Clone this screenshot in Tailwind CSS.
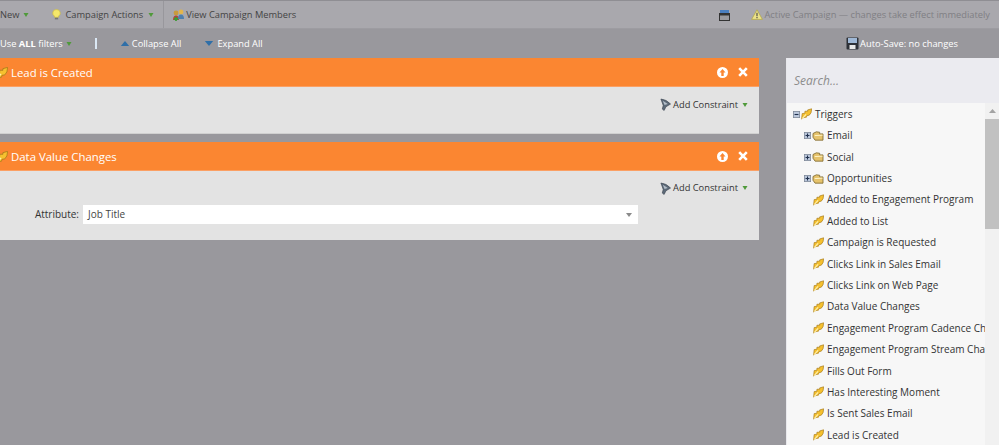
<!DOCTYPE html>
<html lang="en">
<head>
    <meta charset="UTF-8">
    <title>Smart List</title>
    <script src="https://cdn.jsdelivr.net/npm/@tailwindcss/browser@4"></script>
</head>
<body class="w-[999px] h-[445px] overflow-hidden bg-[#99989d] font-['Open_Sans',sans-serif] text-[9.3px] text-[#333]">

    <svg class="hidden">
        <symbol id="quill" viewBox="0 0 14 14">
            <path d="M0.8 13.5 L1.5 6.5 L5 6 L5 3.5 L8.5 3.5 L8.5 1.8 L13.6 0.4 Q13.6 6 10.5 8.5 L7.5 9 L7 11 L3.5 11.5 Z" fill="#f6c12f" stroke="#a97c1c" stroke-width="0.9"/>
            <path d="M1.5 13 L6.5 7.5" stroke="#fff1b0" stroke-width="1.4" fill="none"/>
        </symbol>
        <symbol id="folder" viewBox="0 0 14 12">
            <path d="M1 3 L5 1 L9 1.5 L9 3.5 L13 3.5 L13 11 L3.5 11 L1 7.5 Z" fill="#e6c36c" stroke="#7d672f" stroke-width="1"/>
            <path d="M3 5.5 L12.5 5" stroke="#fff3c4" stroke-width="1.2"/>
        </symbol>
        <symbol id="plus" viewBox="0 0 9 9">
            <rect x="0.5" y="0.5" width="8" height="8" fill="#bcc8dc" stroke="#7d8797"/>
            <path d="M2 4.5 H7 M4.5 2 V7" stroke="#1f2f4c" stroke-width="1.4"/>
        </symbol>
        <symbol id="minus" viewBox="0 0 9 9">
            <rect x="0.5" y="0.5" width="8" height="8" fill="#bcc8dc" stroke="#7d8797"/>
            <path d="M2 4.5 H7" stroke="#1f2f4c" stroke-width="1.4"/>
        </symbol>
        <symbol id="caret" viewBox="0 0 6 6">
            <path d="M0.5 1 H5.5 L3 5 Z" fill="#4f9a3a"/>
        </symbol>
        <symbol id="funnel" viewBox="0 0 12 14">
            <path d="M1 1 Q7 1.5 11.5 6.5 L6.5 9.5 L4.5 13.5 L2.5 12 L3.5 8 Z" fill="#5d6a78" stroke="#3d4753" stroke-width="0.7"/>
            <path d="M3 3 L8.5 6.5 L5 7.5 Z" fill="#b4bec9"/>
        </symbol>
    </svg>

    <!-- toolbar -->
    <div class="h-[29px] flex items-center bg-[#a9a8ad] border-t border-t-[#8f8e93] border-b border-b-[#9d9ca1] text-[#444]">
        <span>New</span>
        <svg class="w-[6px] h-[6px] ml-[4px]"><use href="#caret"/></svg>
        <svg class="w-[9px] h-[13px] ml-[23px]" viewBox="0 0 11 14">
            <path d="M5.5 1 A4.3 4.3 0 0 1 8 9 V10.5 H3 V9 A4.3 4.3 0 0 1 5.5 1 Z" fill="#f4e76b" stroke="#c9b93f" stroke-width="0.8"/>
            <rect x="3.5" y="11" width="4" height="2" fill="#777"/>
        </svg>
        <span class="ml-[4px]">Campaign Actions</span>
        <svg class="w-[6px] h-[6px] ml-[5px]"><use href="#caret"/></svg>
        <div class="w-px h-full bg-[#98979c] ml-[9px]"></div>
        <svg class="w-[13px] h-[14px] ml-[8px]" viewBox="0 0 13 14">
            <circle cx="4" cy="5" r="2.4" fill="#c99a3c"/>
            <circle cx="9" cy="4" r="2.4" fill="#e2b54c"/>
            <path d="M1 12 Q1 7.5 4 7.5 Q7 7.5 7 12 Z" fill="#b0453a"/>
            <path d="M6 11 Q6 6.5 9 6.5 Q12 6.5 12 11 Z" fill="#4e7fae"/>
            <path d="M2 11 H6 M4 9 V13" stroke="#3e9b35" stroke-width="1.8"/>
        </svg>
        <span class="ml-px">View Campaign Members</span>
        <svg class="w-[11px] h-[12px] ml-auto" viewBox="0 0 11 12">
            <rect x="1" y="1" width="9" height="3" fill="#4a7fc0"/>
            <rect x="0.5" y="4.5" width="10" height="7" fill="#9a9a9f" stroke="#333"/>
            <rect x="0.5" y="4.5" width="10" height="2" fill="#333"/>
        </svg>
        <svg class="w-[12px] h-[11px] ml-[21px]" viewBox="0 0 12 11">
            <path d="M6 0.8 L11.4 10.4 H0.6 Z" fill="#ece38a" stroke="#b5a94b" stroke-width="0.8"/>
            <path d="M6 3.8 V7.2 M6 8 V9.3" stroke="#444" stroke-width="1.1"/>
        </svg>
        <span class="ml-px mr-[9px] text-[#807f84]">Active Campaign — changes take effect immediately</span>
    </div>

    <!-- filter bar -->
    <div class="h-[29px] flex items-center text-white">
        <span>Use <b>ALL</b> filters</span>
        <svg class="w-[6px] h-[6px] ml-[3px]"><use href="#caret"/></svg>
        <div class="w-[2px] h-[11px] bg-[#dbe8f5] ml-[23px]"></div>
        <svg class="w-[10px] h-[5px] ml-[23px]" viewBox="0 0 10 6"><path d="M5 0 L10 6 H0 Z" fill="#2f6fa8"/></svg>
        <span class="ml-[2px]">Collapse All</span>
        <svg class="w-[10px] h-[5px] ml-[23px]" viewBox="0 0 10 6"><path d="M0 0 H10 L5 6 Z" fill="#2f6fa8"/></svg>
        <span class="ml-[3px]">Expand All</span>
        <svg class="w-[13px] h-[13px] ml-auto" viewBox="0 0 13 13">
            <rect x="0.5" y="0.5" width="12" height="12" rx="1" fill="#2d3138"/>
            <rect x="2" y="1" width="9" height="5" fill="#9fb8d6"/>
            <rect x="3.5" y="8" width="6" height="4" fill="#e8e8e8"/>
        </svg>
        <span class="ml-px mr-[41px]">Auto-Save: no changes</span>
    </div>

    <div class="flex items-start">
        <!-- filter panels -->
        <div class="w-[759px] flex flex-col gap-[8px]">
            <section class="h-[76px] bg-[#e3e3e3] border-b border-b-[#d0d0d0]">
                <div class="h-[29px] flex items-center pt-[2px] bg-[#fb8631] border-b border-b-[#fba064] text-white text-[11.4px]">
                    <svg class="w-[13px] h-[13px] -ml-[5px] shrink-0"><use href="#quill"/></svg>
                    <span class="ml-[3px]">Lead is Created</span>
                    <svg class="w-[11px] h-[11px] ml-auto -mt-[2px]" viewBox="0 0 11 11"><circle cx="5.5" cy="5.5" r="5.5" fill="#fff"/><path d="M5.5 2 L8.5 5.5 H6.7 V9 H4.3 V5.5 H2.5 Z" fill="#fb8631"/></svg>
                    <svg class="w-[10px] h-[10px] ml-[10px] mr-[11px] -mt-[2px]" viewBox="0 0 10 10"><path d="M1.2 1.2 L8.8 8.8 M8.8 1.2 L1.2 8.8" stroke="#fff" stroke-width="2.6"/></svg>
                </div>
                <div class="h-[34px] flex items-center justify-end pr-[11px] pt-[1px]">
                    <svg class="w-[11px] h-[13px]"><use href="#funnel"/></svg>
                    <span class="ml-[2px]">Add Constraint</span>
                    <svg class="w-[6px] h-[6px] ml-[4px]"><use href="#caret"/></svg>
                </div>
            </section>
            <section class="h-[98px] bg-[#e3e3e3]">
                <div class="h-[29px] flex items-center pt-[2px] bg-[#fb8631] border-b border-b-[#fba064] text-white text-[11.4px]">
                    <svg class="w-[13px] h-[13px] -ml-[5px] shrink-0"><use href="#quill"/></svg>
                    <span class="ml-[3px]">Data Value Changes</span>
                    <svg class="w-[11px] h-[11px] ml-auto -mt-[2px]" viewBox="0 0 11 11"><circle cx="5.5" cy="5.5" r="5.5" fill="#fff"/><path d="M5.5 2 L8.5 5.5 H6.7 V9 H4.3 V5.5 H2.5 Z" fill="#fb8631"/></svg>
                    <svg class="w-[10px] h-[10px] ml-[10px] mr-[11px] -mt-[2px]" viewBox="0 0 10 10"><path d="M1.2 1.2 L8.8 8.8 M8.8 1.2 L1.2 8.8" stroke="#fff" stroke-width="2.6"/></svg>
                </div>
                <div class="h-[34px] flex items-center justify-end pr-[11px]">
                    <svg class="w-[11px] h-[13px]"><use href="#funnel"/></svg>
                    <span class="ml-[2px]">Add Constraint</span>
                    <svg class="w-[6px] h-[6px] ml-[4px]"><use href="#caret"/></svg>
                </div>
                <div class="flex items-center text-[10px]">
                    <span class="w-[79px] text-right">Attribute:</span>
                    <div class="w-[555px] h-[19px] ml-[4px] bg-white flex items-center pl-[5px] pr-[6px] text-[#444]">
                        <span>Job Title</span>
                        <svg class="w-[6px] h-[4px] ml-auto" viewBox="0 0 6 4"><path d="M0 0 H6 L3 4 Z" fill="#8a8a8a"/></svg>
                    </div>
                </div>
            </section>
        </div>

        <!-- trigger palette -->
        <aside class="w-[213px] h-[387px] ml-[27px] flex flex-col bg-[#f7f7f7] border-l border-l-[#e8e8ec] overflow-hidden">
            <div class="h-[45px] shrink-0 bg-[#ebebf0] flex items-center pl-[7px] italic text-[12px] text-[#8d8d8d]">Search...</div>
            <div class="flex flex-1 min-h-0">
                <ul class="flex-1 min-w-0 whitespace-nowrap overflow-hidden pt-[0.7px] text-[10px]">
                    <li class="h-[21.4px] flex items-center pl-[6px]">
                        <svg class="w-[7px] h-[7px] shrink-0"><use href="#minus"/></svg>
                        <svg class="w-[11px] h-[12px] ml-[1px] shrink-0"><use href="#quill"/></svg>
                        <span class="ml-[3px]">Triggers</span>
                    </li>
                    <li class="h-[21.4px] flex items-center pl-[17px]">
                        <svg class="w-[7px] h-[7px] shrink-0"><use href="#plus"/></svg>
                        <svg class="w-[12px] h-[10px] ml-px shrink-0"><use href="#folder"/></svg>
                        <span class="ml-[3px]">Email</span>
                    </li>
                    <li class="h-[21.4px] flex items-center pl-[17px]">
                        <svg class="w-[7px] h-[7px] shrink-0"><use href="#plus"/></svg>
                        <svg class="w-[12px] h-[10px] ml-px shrink-0"><use href="#folder"/></svg>
                        <span class="ml-[3px]">Social</span>
                    </li>
                    <li class="h-[21.4px] flex items-center pl-[17px]">
                        <svg class="w-[7px] h-[7px] shrink-0"><use href="#plus"/></svg>
                        <svg class="w-[12px] h-[10px] ml-px shrink-0"><use href="#folder"/></svg>
                        <span class="ml-[3px]">Opportunities</span>
                    </li>
                    <li class="h-[21.4px] flex items-center pl-[26px]"><svg class="w-[11px] h-[12px] shrink-0"><use href="#quill"/></svg><span class="ml-[3px]">Added to Engagement Program</span></li>
                    <li class="h-[21.4px] flex items-center pl-[26px]"><svg class="w-[11px] h-[12px] shrink-0"><use href="#quill"/></svg><span class="ml-[3px]">Added to List</span></li>
                    <li class="h-[21.4px] flex items-center pl-[26px]"><svg class="w-[11px] h-[12px] shrink-0"><use href="#quill"/></svg><span class="ml-[3px]">Campaign is Requested</span></li>
                    <li class="h-[21.4px] flex items-center pl-[26px]"><svg class="w-[11px] h-[12px] shrink-0"><use href="#quill"/></svg><span class="ml-[3px]">Clicks Link in Sales Email</span></li>
                    <li class="h-[21.4px] flex items-center pl-[26px]"><svg class="w-[11px] h-[12px] shrink-0"><use href="#quill"/></svg><span class="ml-[3px]">Clicks Link on Web Page</span></li>
                    <li class="h-[21.4px] flex items-center pl-[26px]"><svg class="w-[11px] h-[12px] shrink-0"><use href="#quill"/></svg><span class="ml-[3px]">Data Value Changes</span></li>
                    <li class="h-[21.4px] flex items-center pl-[26px]"><svg class="w-[11px] h-[12px] shrink-0"><use href="#quill"/></svg><span class="ml-[3px]">Engagement Program Cadence Changes</span></li>
                    <li class="h-[21.4px] flex items-center pl-[26px]"><svg class="w-[11px] h-[12px] shrink-0"><use href="#quill"/></svg><span class="ml-[3px]">Engagement Program Stream Changes</span></li>
                    <li class="h-[21.4px] flex items-center pl-[26px]"><svg class="w-[11px] h-[12px] shrink-0"><use href="#quill"/></svg><span class="ml-[3px]">Fills Out Form</span></li>
                    <li class="h-[21.4px] flex items-center pl-[26px]"><svg class="w-[11px] h-[12px] shrink-0"><use href="#quill"/></svg><span class="ml-[3px]">Has Interesting Moment</span></li>
                    <li class="h-[21.4px] flex items-center pl-[26px]"><svg class="w-[11px] h-[12px] shrink-0"><use href="#quill"/></svg><span class="ml-[3px]">Is Sent Sales Email</span></li>
                    <li class="h-[21.4px] flex items-center pl-[26px]"><svg class="w-[11px] h-[12px] shrink-0"><use href="#quill"/></svg><span class="ml-[3px]">Lead is Created</span></li>
                </ul>
                <!-- scrollbar -->
                <div class="w-[14px] shrink-0 bg-[#f1f1f1] flex flex-col">
                    <div class="h-[16px] flex items-center justify-center">
                        <svg class="w-[7px] h-[4px]" viewBox="0 0 7 4"><path d="M3.5 0 L7 4 H0 Z" fill="#a3a3a3"/></svg>
                    </div>
                    <div class="h-[110px] bg-[#c1c1c1]"></div>
                </div>
            </div>
        </aside>
    </div>
</body>
</html>
